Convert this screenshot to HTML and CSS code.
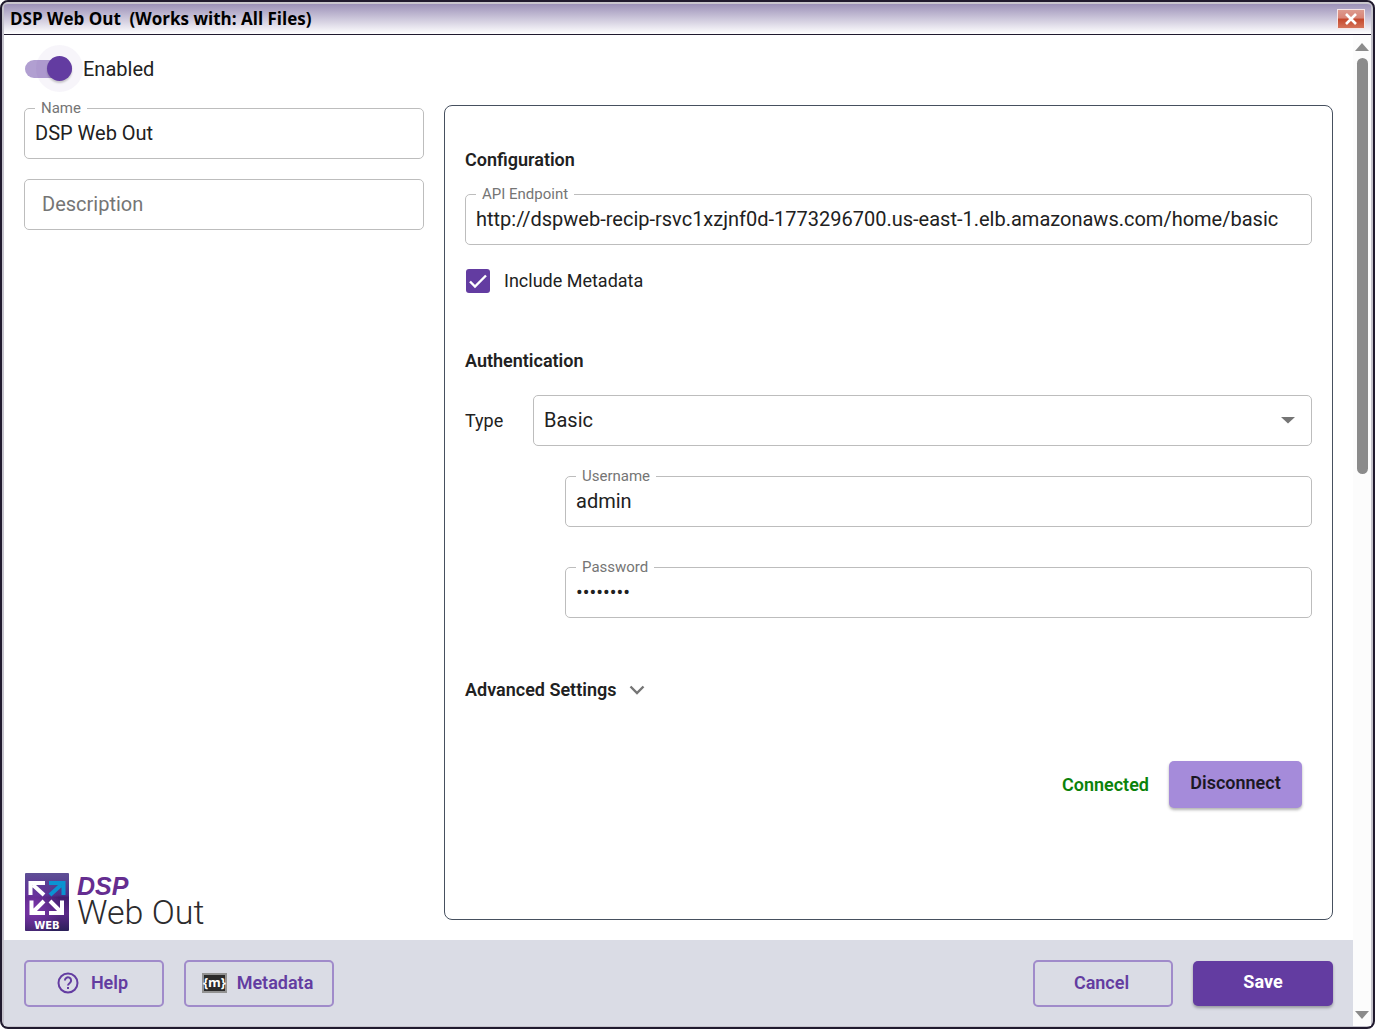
FILE: index.html
```html
<!DOCTYPE html>
<html lang="en">
<head>
<meta charset="utf-8">
<meta name="viewport" content="width=device-width, initial-scale=1">
<title>DSP Web Out</title>
<link rel="stylesheet" href="styles.css">
</head>
<body>
<div class="window">
  <header class="titlebar">
    <h1 class="title">DSP Web Out&nbsp; (Works with: All Files)</h1>
    <button class="close" type="button" aria-label="Close">
      <svg width="14" height="14" viewBox="0 0 14 14"><path d="M2 2l10 10M12 2L2 12" stroke="#fff" stroke-width="2.6" fill="none"/></svg>
    </button>
  </header>
  <div class="client">
    <form class="page">
      <main class="content">
        <section class="side">
          <label class="toggle">
            <input class="toggle-input" type="checkbox" role="switch" checked>
            <span>Enabled</span>
          </label>
          <div class="field">
            <input class="input" id="name" type="text" value="DSP Web Out">
            <label class="float" for="name">Name</label>
          </div>
          <div class="field field-next">
            <input class="input input-empty" type="text" placeholder="Description" aria-label="Description">
          </div>
          <div class="logo">
            <svg width="44" height="58" viewBox="0 0 44 58" aria-hidden="true">
              <defs>
                <linearGradient id="tile" x1="0" y1="0" x2="0" y2="1">
                  <stop offset="0" stop-color="#5f5096"/><stop offset=".38" stop-color="#4c3189"/>
                  <stop offset=".42" stop-color="#42206f"/><stop offset=".7" stop-color="#5b2a88"/>
                  <stop offset="1" stop-color="#2b2059"/>
                </linearGradient>
                <radialGradient id="glow" cx=".2" cy=".6" r=".6">
                  <stop offset="0" stop-color="#7a35a8"/><stop offset="1" stop-color="#7a35a8" stop-opacity="0"/>
                </radialGradient>
              </defs>
              <rect width="44" height="58" rx="1" fill="url(#tile)"/>
              <rect width="44" height="58" rx="1" fill="url(#glow)"/>
              <g fill="none" stroke-width="4">
                <path d="M5.500 22V10H20M8 12l11 10" stroke="#fff"/>
                <path d="M38.500 22V10H24M36 12L25 22" stroke="#0a93d2"/>
                <path d="M6.500 27.500V40H20M8 39l11-11" stroke="#fff"/>
                <path d="M37 27.500V40H24M36 39L25 28" stroke="#fff"/>
              </g>
              <text class="tile-text" x="22" y="56" text-anchor="middle" fill="#fff">WEB</text>
            </svg>
            <div class="logo-words"><span class="logo-dsp">DSP</span><span class="logo-name">Web Out</span></div>
          </div>
        </section>

        <section class="panel">
          <h2 class="heading">Configuration</h2>
          <div class="field">
            <input class="input" id="endpoint" type="text" value="http://dspweb-recip-rsvc1xzjnf0d-1773296700.us-east-1.elb.amazonaws.com/home/basic">
            <label class="float" for="endpoint">API Endpoint</label>
          </div>
          <label class="check">
            <span class="check-box">
              <input class="check-input" type="checkbox" checked>
              <svg class="check-mark" width="24" height="24" viewBox="0 0 24 24" aria-hidden="true"><path d="M4 12.500l5 5L20 6.500" fill="none" stroke="#fff" stroke-width="2.400"/></svg>
            </span>
            <span>Include Metadata</span>
          </label>

          <h2 class="heading">Authentication</h2>
          <div class="type-row">
            <label for="type">Type</label>
            <div class="field">
              <select class="input" id="type"><option>Basic</option></select>
              <svg class="caret" width="14" height="8" viewBox="0 0 14 8" aria-hidden="true"><path d="M0 1h14L7 7.500z" fill="#757575"/></svg>
            </div>
          </div>
          <div class="credentials">
            <div class="field">
              <input class="input" id="user" type="text" value="admin">
              <label class="float" for="user">Username</label>
            </div>
            <div class="field">
              <input class="input" id="pass" type="password" value="password">
              <label class="float" for="pass">Password</label>
            </div>
          </div>

          <button class="advanced" type="button">Advanced Settings
            <svg width="16" height="10" viewBox="0 0 16 10" aria-hidden="true"><path d="M1.500 1.500L8 8l6.500-6.500" fill="none" stroke="#757575" stroke-width="2.400"/></svg>
          </button>
          <div class="connection">
            <span class="status">Connected</span>
            <button class="button button-accent" type="button">Disconnect</button>
          </div>
        </section>
      </main>

      <footer class="footer">
        <button class="button button-outline" type="button">
          <svg width="22" height="22" viewBox="0 0 22 22" aria-hidden="true"><circle cx="11" cy="11" r="9.500" fill="none" stroke="#633ca1" stroke-width="2"/><path d="M7.900 8.500a3.100 3.100 0 1 1 4.900 2.500C11.600 11.900 11 12.400 11 13.600" fill="none" stroke="#633ca1" stroke-width="2"/><rect x="10" y="15" width="2" height="2" fill="#633ca1"/></svg>
          Help
        </button>
        <button class="button button-outline button-wide" type="button">
          <svg width="25" height="20" viewBox="0 0 25 20" aria-hidden="true"><rect x="1" y="1" width="23" height="18" fill="#2b2b2b" stroke="#929292" stroke-width="2"/><text class="meta-text" x="12.500" y="14" text-anchor="middle" fill="#fff">{m}</text></svg>
          Metadata
        </button>
        <span class="spacer"></span>
        <button class="button button-outline" type="button">Cancel</button>
        <button class="button button-primary" type="submit">Save</button>
      </footer>
    </form>
    <div class="scrollbar" aria-hidden="true">
      <svg width="14" height="8" viewBox="0 0 14 8"><path d="M7 0l7 8H0z" fill="#8b8b8b"/></svg>
      <div class="track"><div class="thumb"></div></div>
      <svg width="14" height="8" viewBox="0 0 14 8"><path d="M7 8l7-8H0z" fill="#8b8b8b"/></svg>
    </div>
  </div>
</div>
</body>
</html>
```

FILE: styles.css
```css
* { box-sizing: border-box; }

body {
  margin: 0;
  background: #fff;
  color: #212121;
  font-family: Roboto, "Liberation Sans", sans-serif;
  font-size: 18px;
  line-height: 24px;
}

button, input, select { font: inherit; color: inherit; margin: 0; }

.window {
  display: flex;
  flex-direction: column;
  min-height: 100vh;
  border: 2px solid #201a2e;
  border-radius: 8px;
  background: #c5c3cc;
  padding: 0 2px 1px;
  overflow: hidden;
}

.titlebar {
  display: flex;
  align-items: center;
  justify-content: space-between;
  height: 33px;
  padding: 0 6px;
  border-top: 2px solid #c9c6ce;
  border-bottom: 1px solid #201a2e;
  border-radius: 4px 4px 0 0;
  background: linear-gradient(#9c91b8, #fff);
}

.title {
  margin: 0;
  color: #000;
  font: bold 17px/24px "Open Sans", "Noto Sans", sans-serif;
}

.close {
  display: flex;
  align-items: center;
  justify-content: center;
  width: 28px;
  height: 20px;
  padding: 0;
  border: 1px solid #f6e6e6;
  background: linear-gradient(#dd9a8e, #d98476 45%, #c4472c 50%, #d5735a);
}

.client { display: flex; flex: 1; background: #fff; }

.page { display: flex; flex: 1; flex-direction: column; min-width: 0; }

.content {
  display: grid;
  flex: 1;
  grid-template-columns: 400px minmax(0, 1fr);
  gap: 20px;
  padding: 0 20px 20px;
}

.side { display: flex; flex-direction: column; }

.toggle {
  display: flex;
  align-items: center;
  gap: 11px;
  height: 68px;
  margin-bottom: 5px;
  font-size: 20px;
}

.toggle-input {
  position: relative;
  appearance: none;
  width: 47px;
  height: 18px;
  margin-left: 1px;
  border-radius: 9px;
  background: #b19fd1;
}

.toggle-input::after {
  content: "";
  position: absolute;
  top: -4px;
  right: 0;
  width: 25px;
  height: 25px;
  border-radius: 50%;
  background: #633ca1;
  box-shadow: 0 0 0 11px rgba(99, 60, 161, 0.05), 0 2px 2px rgba(0, 0, 0, 0.2);
}

.field { position: relative; }
.field-next { margin-top: 20px; }

.input {
  display: block;
  width: 100%;
  height: 51px;
  padding: 0 10px 2px;
  border: 1px solid #bdbdbd;
  border-radius: 5px;
  background: #fff;
  font-size: 20px;
  appearance: none;
  outline: 0;
}

.input-empty { padding: 0 17px 2px; }
.input::placeholder { color: #757575; opacity: 1; }

.float {
  position: absolute;
  top: -10px;
  left: 11px;
  padding: 0 6px;
  background: #fff;
  color: #757575;
  font-size: 15px;
  line-height: 20px;
}

.caret {
  position: absolute;
  top: 21px;
  right: 17px;
  pointer-events: none;
}

.logo {
  display: flex;
  gap: 8px;
  margin-top: auto;
  margin-bottom: -11px;
  padding-left: 1px;
}

.logo-words { display: flex; flex-direction: column; font-family: "Liberation Sans", sans-serif; }
.logo-dsp { color: #652d90; font-size: 25px; font-style: italic; font-weight: bold; line-height: 26px; }
.logo-name { color: #2c2b2d; font-family: Roboto, sans-serif; font-size: 34px; font-weight: 300; line-height: 26px; }
.tile-text { font: bold 10px "DejaVu Sans", sans-serif; }
.meta-text { font: bold 13px "Open Sans", sans-serif; }

.panel {
  margin-top: 70px;
  padding: 42px 20px 111px;
  border: 1px solid #46505f;
  border-radius: 8px;
}

.heading { margin: 0 0 22px; font-size: 18px; font-weight: 600; line-height: 24px; }

.check {
  display: flex;
  align-items: center;
  gap: 14px;
  margin: 24px 0 56px 1px;
}

.check-box { display: grid; }
.check-input, .check-mark { grid-area: 1 / 1; }
.check-mark { pointer-events: none; position: relative; }

.check-input {
  appearance: none;
  width: 24px;
  height: 24px;
  border-radius: 3px;
  background: #633ca1;
}

.type-row {
  display: grid;
  grid-template-columns: 48px minmax(0, 1fr);
  gap: 20px;
  align-items: center;
}

.credentials {
  display: flex;
  flex-direction: column;
  gap: 40px;
  margin: 30px 0 60px 100px;
}

.advanced {
  display: flex;
  align-items: center;
  gap: 13px;
  padding: 0;
  border: 0;
  background: none;
  font-weight: 600;
}

.connection {
  display: flex;
  align-items: center;
  justify-content: flex-end;
  gap: 20px;
  margin: 59px 10px 0 0;
}

.status { color: #0a820a; font-weight: 600; }

.button {
  display: flex;
  align-items: center;
  justify-content: center;
  gap: 12px;
  width: 140px;
  height: 47px;
  padding: 0 0 3px;
  border: 0;
  border-radius: 5px;
  font-size: 18px;
  font-weight: 600;
}

.button-wide { width: 150px; gap: 10px; }
.button-outline { padding: 0 3px 2px 0; border: 2px solid #a08bca; background: transparent; color: #633ca1; }
.button-primary { height: 45px; background: #633ca1; color: #fff; font-weight: 700; box-shadow: 0 2px 3px rgba(0, 0, 0, 0.3); }
.button-accent { width: 133px; background: #a58bda; color: #1c1824; box-shadow: 0 2px 3px rgba(0, 0, 0, 0.3); }

.footer {
  display: flex;
  align-items: center;
  gap: 20px;
  padding: 20px 20px 19px;
  background: #dadce5;
}

.spacer { flex: 1; }

.scrollbar {
  display: flex;
  flex-direction: column;
  align-items: center;
  gap: 7px;
  width: 18px;
  padding: 8px 0 7px;
  background: #fcfcfc;
}

.track { flex: 1; width: 11px; }
.thumb { height: 44%; border-radius: 6px; background: #8b8b8b; }
```
